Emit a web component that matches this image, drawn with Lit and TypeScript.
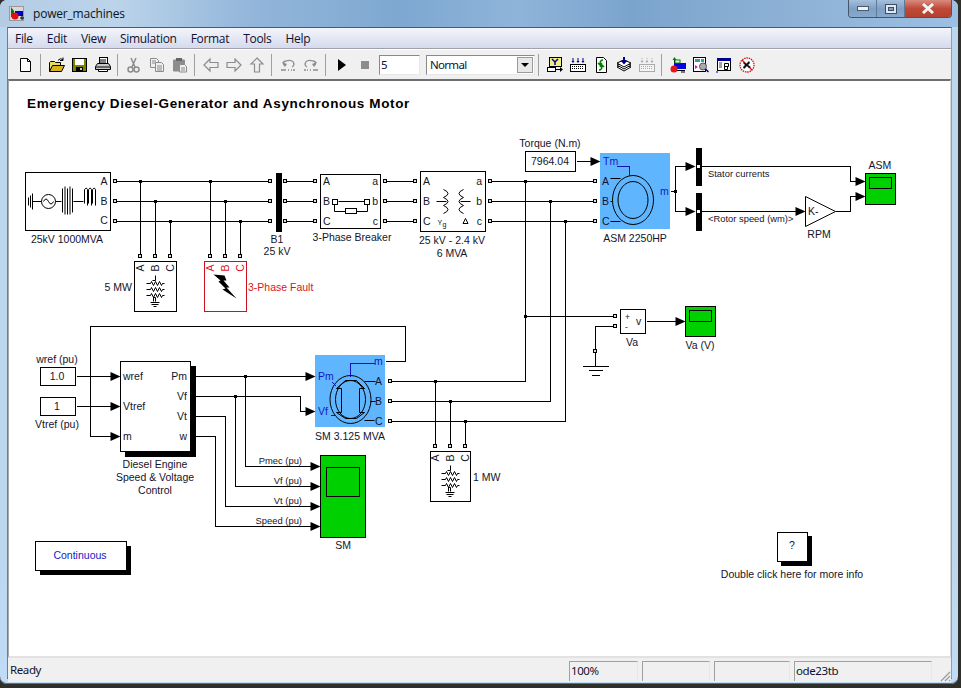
import { LitElement, css, html, svg } from "lit";
import { customElement } from "lit/decorators.js";

// ---- diagram data, coordinates are screen pixels ----
const PHASES = [181, 201, 221];

const WIRES = [
  "M115 181H270M115 201H270M115 221H270",
  "M140 181V256M155 201V256M170 221V256M210 181V256M225 201V256M240 221V256",
  "M285 181H315M285 201H315M285 221H315",
  "M385 181H415M385 201H415M385 221H415",
  "M490 181H595M490 201H595M490 221H595",
  "M525 181V381H390M550 201V401H390M565 221V421H390",
  "M435 381V446M450 401V446M465 421V446",
  "M525 316H615M615 326H595V351M595 351V366",
  "M582 366H608M588 370H602M591 375H599",
  "M646 321H676M576 161H591",
  "M670 191H675M686 166H675V211H686",
  "M701 166H850V181H856M701 211H796M835 211H850V196H856",
  "M385 361H405V326H90V436H111M76 376H111M76 406H111",
  "M195 376H306M195 396H300V411H306M195 416H225V506H311M195 436H215V526H311",
  "M245 376V466H311M235 396V486H311",
];

const JUNCTIONS = [
  [140, 181], [210, 181], [155, 201], [225, 201], [170, 221], [240, 221],
  [525, 181], [550, 201], [565, 221], [525, 316], [675, 191],
  [435, 381], [450, 401], [465, 421], [245, 376], [235, 396],
];

const PORTS: number[][] = [
  ...[115, 270, 285, 315, 385, 415, 490, 595].flatMap((x) => PHASES.map((y) => [x, y])),
  ...[140, 155, 170, 210, 225, 240].map((x) => [x, 256]),
  ...[435, 450, 465].map((x) => [x, 446]),
  ...[381, 401, 421].map((y) => [390, y]),
  [615, 316], [615, 326], [595, 351],
];

const ARROWS = [
  [600, 161], [695, 166], [695, 211], [865, 181], [865, 196], [805, 211], [685, 321],
  [120, 376], [120, 406], [120, 436], [315, 376], [315, 411],
  [320, 466], [320, 486], [320, 506], [320, 526],
];

// x, centre y, text, anchor, class
const LABELS: [number, number, string, string, string][] = [
  [104, 181, "A", "middle", ""], [104, 201, "B", "middle", ""], [104, 220, "C", "middle", ""],
  [67, 239, "25kV 1000MVA", "middle", ""],
  [277, 239, "B1", "middle", ""], [277, 251, "25 kV", "middle", ""],
  [132, 287, "5 MW", "end", ""], [248, 287, "3-Phase Fault", "start", "red"],
  [323, 181, "A", "start", ""], [323, 201, "B", "start", ""], [323, 221, "C", "start", ""],
  [378, 181, "a", "end", ""], [378, 201, "b", "end", ""], [378, 221, "c", "end", ""],
  [352, 237, "3-Phase Breaker", "middle", ""],
  [423, 181, "A", "start", ""], [423, 201, "B", "start", ""], [423, 221, "C", "start", ""],
  [482, 181, "a", "end", ""], [482, 201, "b", "end", ""], [482, 221, "c", "end", ""],
  [452, 240, "25 kV - 2.4 kV", "middle", ""], [452, 253, "6 MVA", "middle", ""],
  [550, 143, "Torque (N.m)", "middle", ""], [550, 161, "7964.04", "middle", ""],
  [603, 161, "Tm", "start", "blue"], [660, 191, "m", "start", "blue"],
  [602, 181, "A", "start", ""], [602, 201, "B", "start", ""], [602, 221, "C", "start", ""],
  [635, 238, "ASM 2250HP", "middle", ""],
  [708, 173, "Stator currents", "start", "sig"], [708, 218, "<Rotor speed (wm)>", "start", "sig"],
  [808, 211, "K-", "start", ""], [819, 234, "RPM", "middle", ""], [880, 165, "ASM", "middle", ""],
  [625, 316, "+", "start", "sign"], [625, 326, "-", "start", "sign"], [636, 321, "v", "start", ""],
  [632, 342, "Va", "middle", ""], [700, 345, "Va (V)", "middle", ""],
  [57, 359, "wref (pu)", "middle", ""], [57, 376, "1.0", "middle", ""],
  [57, 406, "1", "middle", ""], [57, 424, "Vtref (pu)", "middle", ""],
  [123, 376, "wref", "start", ""], [123, 406, "Vtref", "start", ""], [123, 436, "m", "start", ""],
  [187, 376, "Pm", "end", ""], [187, 396, "Vf", "end", ""], [187, 416, "Vt", "end", ""], [187, 436, "w", "end", ""],
  [155, 464, "Diesel Engine", "middle", ""], [155, 477, "Speed & Voltage", "middle", ""], [155, 490, "Control", "middle", ""],
  [318, 376, "Pm", "start", "blue"], [318, 411, "Vf", "start", "blue"], [374, 361, "m", "start", "blue"],
  [375, 381, "A", "start", ""], [375, 401, "B", "start", ""], [375, 421, "C", "start", ""],
  [350, 436, "SM 3.125 MVA", "middle", ""], [473, 477, "1 MW", "start", ""],
  [302, 460, "Pmec (pu)", "end", "sig"], [302, 480, "Vf (pu)", "end", "sig"],
  [302, 500, "Vt (pu)", "end", "sig"], [302, 520, "Speed (pu)", "end", "sig"],
  [343, 545, "SM", "middle", ""],
  [80, 555, "Continuous", "middle", "blue"], [792, 545, "?", "middle", ""],
  [792, 574, "Double click here for more info", "middle", ""],
];

// x, baseline offset y, letter, class for the terminals written sideways
const ROTATED: [number, number, string, string][] = [
  [140, 268, "A", ""], [155, 268, "B", ""], [170, 268, "C", ""],
  [210, 268, "A", "red"], [225, 268, "B", "red"], [240, 268, "C", "red"],
  [435, 458, "A", ""], [450, 458, "B", ""], [465, 458, "C", ""],
];

// x, y, w, h plain white blocks
const BLOCKS = [
  [25, 172, 85, 58], [320, 174, 60, 54], [420, 171, 65, 60],
  [525, 151, 50, 20], [620, 309, 25, 24], [134, 261, 42, 50], [430, 451, 40, 50],
  [40, 367, 35, 18], [40, 397, 35, 18],
];

function rect(r: number[], cls = "blk") {
  return svg`<rect class=${cls} x=${r[0]} y=${r[1]} width=${r[2]} height=${r[3]}></rect>`;
}

// three stacked resistors and a ground, used for both load blocks
function load(cx: number, top: number) {
  const zig = (y: number) =>
    `M${cx - 9} ${y}h4l1-2 2 4 2-4 2 4 2-4 2 4 1-2h2`;
  return svg`<path class="thin" d="M${cx} ${top + 14}v5h-3 M${cx} ${top + 36}h-2v4 M${cx} ${top + 36}v4
    ${zig(top + 22)} ${zig(top + 28)} ${zig(top + 34)}
    M${cx - 5} ${top + 41}h9 M${cx - 4} ${top + 43}h7 M${cx - 2} ${top + 45}h3"></path>`;
}

function scope(x: number, y: number, w: number, h: number, sx: number, sy: number, sw: number, sh: number) {
  return svg`${rect([x, y, w, h], "green")}${rect([sx, sy, sw, sh], "screen")}`;
}

function diagram() {
  return svg`
    <text class="heading" x="27" y="107.5">Emergency Diesel-Generator and Asynchronous Motor</text>
    <rect class="motor" x="600" y="153" width="70" height="76"></rect>
    <rect class="motor" x="315" y="355" width="70" height="72"></rect>
    <g transform="translate(.5 .5)">
      ${BLOCKS.map((b) => rect(b))}
      ${rect([204, 261, 42, 50], "fault")}
      <rect class="shadow" x="124" y="365" width="71" height="91"></rect>
      ${rect([120, 361, 70, 90])}
      <rect class="shadow" x="39" y="545" width="91" height="29"></rect>
      ${rect([35, 541, 91, 29])}
      <rect class="shadow" x="780" y="535" width="31" height="30"></rect>
      ${rect([777, 532, 30, 29])}
      ${scope(865, 173, 30, 31, 869, 177, 22, 11)}
      ${scope(685, 306, 30, 30, 689, 310, 22, 11)}
      ${scope(320, 455, 45, 82, 326, 467, 33, 29)}
      <rect class="bus" x="275" y="172" width="6" height="59"></rect>
      <rect class="bus" x="695" y="147" width="6" height="38"></rect>
      <rect class="bus" x="695" y="192" width="6" height="38"></rect>
      <path class="gainp" d="M805 196V226L835 211Z"></path>

      <path class="wire" d=${WIRES.join("")}></path>
      ${JUNCTIONS.map((j) => svg`<rect class="dot" x=${j[0] - 1} y=${j[1] - 1} width="2" height="2"></rect>`)}
      ${PORTS.map((p) => svg`<rect class="port" x=${p[0] - 2} y=${p[1] - 2} width="3" height="3"></rect>`)}
      <path class="busport" d="M696 164h4v4h-4zM696 209h4v4h-4z"></path>

      <!-- source -->
      <path class="thin" d="M28 197v8M30 195v12M32 193v16M32 201H41M55 201h6
        M62 188v24M64.500 186v28M67 188v26M69.500 186v28M72 188v24
        M73 201h10M84 189q2-3 3 0v16M84 189v14M88 189q2-3 3 0v16M88 189v14M92 189q2-3 3 0v16M92 189v14"></path>
      <circle class="thin" cx="48" cy="201" r="7"></circle>
      <path class="thin" d="M43 201q2.500-5 5 0t5 0"></path>

      ${load(155, 261)}
      ${load(450, 451)}
      <path class="fill" d="M213 274L224 275L226 280L223 280L229 287L226 287L236 298L222 289L225 288L218 281L220 280Z"></path>

      <!-- breaker -->
      <path class="thin" d="M338 201H364M334 204V211H345M356 211H367V204"></path>
      <rect class="blk" x="332" y="199" width="5" height="5"></rect>
      <rect class="blk" x="364" y="199" width="5" height="5"></rect>
      <rect class="blk" x="345" y="208" width="11" height="5"></rect>

      <!-- transformer -->
      <path class="thin" d="M436 201h10M460 201h10
        M443 189q9 4 0 8q9 4 0 8q9 4 0 8M463 189q-9 4 0 8q-9 4 0 8q-9 4 0 8"></path>
      <text class="tiny" x="437" y="224">Y</text><text class="tiny" x="442" y="226">g</text>
      <path class="thin" d="M465 218l2.500 5h-5z"></path>

      <!-- asynchronous motor -->
      <ellipse class="thin" cx="632.500" cy="199.500" rx="20.500" ry="24.500"></ellipse>
      <ellipse class="thin" cx="632.500" cy="199.500" rx="15" ry="18.500"></ellipse>
      <path class="bluewire" d="M616 166H629V175"></path>
      <path class="thin" d="M610 178H620M610 201H612M610 221H620"></path>

      <!-- synchronous machine -->
      <ellipse class="thin" cx="350" cy="399" rx="20.500" ry="24"></ellipse>
      <ellipse class="thin" cx="350" cy="399" rx="15" ry="19"></ellipse>
      <path class="thin" d="M345 380H356L364 388H359V412H364L356 418H345L336 412H341V388H336Z"></path>
      <path class="bluewire" d="M350 376V363H374M332 382L336 386M330 415H334"></path>
      <path class="thin" d="M364 381H375M370 401H375M364 420H374"></path>

      ${ARROWS.map((a) => svg`<path class="fill" d="M${a[0] - 10} ${a[1] - 4.500}V${a[1] + 4.500}L${a[0]} ${a[1]}Z"></path>`)}
    </g>
    ${LABELS.map((l) => svg`<text class="lbl ${l[4]}" x=${l[0]} y=${l[1] + 4} text-anchor=${l[3]}>${l[2]}</text>`)}
    ${ROTATED.map((r) => svg`
      <text class="lbl ${r[3]}" text-anchor="middle" transform="translate(${r[0] + 4} ${r[1]}) rotate(-90)">${r[2]}</text>`)}
  `;
}

// ---- toolbar icons, 16x16 ----
const G = "#8c8c8c";
const ICONS: Record<string, unknown> = {
  doc: svg`<path d="M2.500 1.500h7l3 3v10h-10z" fill="#fff" stroke="#000"/><path d="M9.500 1.500v3h3" fill="none" stroke="#000"/>`,
  open: svg`<path d="M.5 14.500V5.500l1-1h4l1 1h5v3" fill="#e8dc60" stroke="#000"/><path d="M.5 14.500l3-6h12l-3 6z" fill="#d8b020" stroke="#000"/><path d="M9 3.500q2-3 5-1M14 .5v3h-3" fill="none" stroke="#000"/>`,
  save: svg`<rect x=".5" y="1.500" width="14" height="13" fill="#808000" stroke="#000"/><rect x="3" y="2" width="9" height="6" fill="#fff"/><rect x="4" y="10" width="7" height="4" fill="#000"/><rect x="8" y="11" width="2" height="2" fill="#ccc"/>`,
  print: svg`<rect x="4.500" y=".5" width="8" height="6" fill="#fff" stroke="#000"/><path d="M5 3h6M5 5h6" stroke="#000"/><path d="M2.500 6.500h11l2 3v3h-15v-3z" fill="#c8c8c8" stroke="#000"/><path d="M1 10h14" stroke="#000"/><path d="M3.500 12.500h9v2h-9z" fill="#fff" stroke="#000"/>`,
  cut: svg`<path d="M5 1l4 9M10 1L6 10" stroke="${G}" fill="none" stroke-width="1.500"/><circle cx="4.500" cy="12.500" r="2.500" fill="none" stroke="${G}" stroke-width="1.500"/><circle cx="10.500" cy="12.500" r="2.500" fill="none" stroke="${G}" stroke-width="1.500"/>`,
  copy: svg`<path d="M1.500 1.500h6l2 2v7h-8z" fill="#eee" stroke="${G}"/><path d="M6.500 5.500h6l2 2v7h-8z" fill="#eee" stroke="${G}"/><path d="M3 4h4M3 6h3M8 9h5M8 11h5M8 13h5" stroke="${G}"/>`,
  paste: svg`<rect x="1" y="2.500" width="12" height="12" rx="1" fill="${G}"/><rect x="4" y="1" width="6" height="3" fill="#666"/><path d="M7.500 7.500h5l2 2v5.500h-7z" fill="#eee" stroke="${G}"/><path d="M9 11h4M9 13h4" stroke="${G}"/>`,
  back: svg`<path d="M1 8l6-6v3.500h8v5H7V14z" fill="#eee" stroke="${G}" stroke-width="1.200"/>`,
  forward: svg`<path d="M15 8L9 2v3.500H1v5h8V14z" fill="#eee" stroke="${G}" stroke-width="1.200"/>`,
  up: svg`<path d="M8 1l6 6h-3.500v8h-5V7H2z" fill="#eee" stroke="${G}" stroke-width="1.200"/>`,
  undo: svg`<path d="M5 9Q1 5 6 4q7-2 8 3 0 2-2 3" fill="none" stroke="${G}" stroke-width="1.300"/><path d="M2 5l3 5 2-3z" fill="${G}"/><path d="M1 13h5M8 13h1M11 13h1M13 13h2" stroke="${G}" stroke-width="1.500"/>`,
  redo: svg`<path d="M11 9q4-4-1-5Q3 2 2 7q0 2 2 3" fill="none" stroke="${G}" stroke-width="1.300"/><path d="M14 5l-3 5-2-3z" fill="${G}"/><path d="M15 13h-5M8 13H7M5 13H4M3 13H1" stroke="${G}" stroke-width="1.500"/>`,
  play: svg`<path d="M4 2l8 6-8 6z" fill="#000"/>`,
  stop: svg`<rect x="4" y="4" width="8" height="8" fill="${G}"/>`,
  library: svg`<rect x="2.500" y=".5" width="12" height="9" fill="#f4f080" stroke="#000"/><path d="M5 2l3 3 3-3M8 5v3" stroke="#00008c" stroke-width="1.500" fill="none"/><rect x=".5" y="10.500" width="8" height="4" fill="#fff" stroke="#000"/><path d="M9 12.500h5" stroke="#000"/><path d="M13 10l3 2.500-3 2.500z" fill="#000"/>`,
  keys: svg`<path d="M3 1v4M8 1v4M13 1v4" stroke="#00008c"/><path d="M1.500 4l1.500 2 1.500-2zM6.500 4l1.500 2 1.500-2zM11.500 4l1.500 2 1.500-2z" fill="#00008c"/><rect x=".5" y="7.500" width="15" height="7" fill="#fff" stroke="#000"/><path d="M2 9.500h12M2 11.500h12" stroke="#000" stroke-dasharray="1 1"/>`,
  refresh: svg`<path d="M3.500 .5h7l3 3v12h-10z" fill="#fff" stroke="#000"/><path d="M10 3q-3 0-3 4M5 6l2 2 2-2M6 13q3 0 3-4M11 10L9 8l-2 2" fill="none" stroke="#008000" stroke-width="1.500"/>`,
  stack: svg`<path d="M8 7L1 10l7 4 7-4z" fill="#fff" stroke="#000"/><path d="M8 5L1 8l7 4 7-4z" fill="#fff" stroke="#000"/><path d="M8 3L1 6l7 4 7-4z" fill="#fff" stroke="#000"/><path d="M8 0v4" stroke="#00008c" stroke-width="2"/><path d="M4.500 3.500h7L8 7.500z" fill="#00008c"/>`,
  keysoff: svg`<path d="M3 1v4M8 1v4M13 1v4" stroke="#aaa" stroke-dasharray="1 1"/><path d="M1.500 4l1.500 2 1.500-2zM6.500 4l1.500 2 1.500-2zM11.500 4l1.500 2 1.500-2z" fill="#aaa"/><rect x=".5" y="7.500" width="15" height="7" fill="#f4f4f4" stroke="#aaa"/><path d="M2 9.500h12M2 11.500h12" stroke="#aaa" stroke-dasharray="1 1"/>`,
  data: svg`<path d="M4.500 1v12.500H15" fill="none" stroke="#000"/><path d="M2.500 3L4.500 0l2 3z" fill="#008000"/><rect x="4" y="6" width="12" height="6" fill="#0000e0"/><rect x="5" y="3" width="5" height="3" fill="#fff" stroke="#008000"/><circle cx="4" cy="12" r="3.500" fill="#e01818"/><path d="M11 15h4" stroke="#000"/>`,
  explore: svg`<rect x=".5" y=".5" width="12" height="14" fill="#fff" stroke="#000"/><rect x="2" y="2" width="5" height="3" fill="#30a0a0"/><rect x="8" y="2" width="3" height="3" fill="#30a0a0"/><path d="M2 8l3 2-3 2z" fill="#f000f0"/><circle cx="10" cy="9.500" r="3.500" fill="#aaa" stroke="#555"/><path d="M12.500 12l3 3" stroke="#00008c" stroke-width="1.500"/>`,
  window: svg`<rect x="1.500" y="1.500" width="13" height="12" fill="#fff" stroke="#000"/><rect x="1" y="1" width="14" height="3" fill="#00008c"/><path d="M3 6h3M3 8h3M3 10h3" stroke="#444"/><path d="M8.500 6.500h4v3h-4zM8.500 9.500h3v3h-3z" fill="none" stroke="#000"/><path d="M0 15h2" stroke="#00008c"/>`,
  bug: svg`<circle cx="8" cy="8" r="7" fill="#fff" stroke="#e01010" stroke-dasharray="1.500 .8" stroke-width="1.300"/><path d="M3 3l10 10" stroke="#e01010" stroke-width="1.300"/><path d="M5 5l2 2 3-3 1 2-2 2 3 2-2 1-2-2-3 3-1-2 2-2-2-2z" fill="#111"/>`,
};

const LEFT_TOOLS = [["doc"], ["open", "save", "print"], ["cut", "copy", "paste"], ["back", "forward", "up"], ["undo", "redo"], ["play", "stop"]];
const RIGHT_TOOLS = [["library", "keys", "refresh", "stack", "keysoff"], ["data", "explore", "window", "bug"]];
const MENUS = ["File", "Edit", "View", "Simulation", "Format", "Tools", "Help"];

@customElement("app-root")
export class AppRoot extends LitElement {
  static styles = css`
    :host {
      display: block;
      width: 961px;
      height: 688px;
      overflow: hidden;
      background: #2e2e2a;
      font-family: "Open Sans", "Noto Sans", sans-serif;
      color: #101030;
    }
    .window {
      width: 958px;
      height: 684px;
      box-sizing: border-box;
      padding: 0 6px 5px 7px;
      display: flex;
      flex-direction: column;
      border-radius: 7px;
      background: linear-gradient(180deg, #bcd6ee 0 80%, #c0dcf6 100%);
      box-shadow: inset 0 -1px 0 #5c7080;
    }
    .title {
      height: 27px;
      flex: none;
      margin: 0 -6px 0 -7px;
      padding: 0 6px 0 9px;
      display: flex;
      align-items: flex-start;
      border-radius: 7px 7px 0 0;
      background: linear-gradient(90deg, #b3cce4 0, #bcd4ea 12%, #93b6da 26%, #7ea8d1 42%, #8fb4da 54%, #7ba4cd 66%, #8db1d5 82%, #9cc0e3 100%);
    }
    .appicon {
      margin-top: 6px;
      width: 15px;
      height: 15px;
      flex: none;
    }
    .caption {
      margin: 5px 0 0 9px;
      font-size: 12px;
      line-height: 18px;
      color: #0c1420;
      letter-spacing: -0.2px;
    }
    .controls {
      margin-left: auto;
      display: flex;
      height: 18px;
      border: 1px solid #44566a;
      border-top: none;
      border-radius: 0 0 4px 4px;
      overflow: hidden;
      box-sizing: border-box;
    }
    .controls div {
      display: flex;
      align-items: center;
      justify-content: center;
      width: 27px;
      border-right: 1px solid #5c7a9a;
      background: linear-gradient(180deg, #a4c0dc, #7f9fc4 50%, #86a9ce);
    }
    .controls .close {
      width: 46px;
      border: none;
      background: linear-gradient(180deg, #d88c80, #bf4a38 50%, #b6402e);
    }
    .content {
      flex: 1;
      display: flex;
      flex-direction: column;
      border: 1px solid #4a5a6a;
      border-left-color: #6a7f94;
      border-right-color: #8aa0b4;
      min-height: 0;
    }
    .menubar {
      height: 20px;
      flex: none;
      display: flex;
      align-items: center;
      padding-left: 7px;
      font-size: 12px;
      background: linear-gradient(180deg, #f4f5fb, #d5dbed);
    }
    .menubar span {
      margin-right: 14px;
      letter-spacing: -0.3px;
    }
    .rule {
      height: 1px;
      flex: none;
      border-top: 1px solid #a0a0a8;
      background: #fff;
    }
    .toolbar {
      height: 29px;
      flex: none;
      display: flex;
      align-items: center;
      padding-left: 6px;
      background: #f0f0f0;
    }
    .tool {
      width: 23px;
      height: 16px;
      flex: none;
      display: flex;
      justify-content: center;
    }
    .tool svg {
      width: 16px;
      height: 16px;
      display: block;
    }
    .sep {
      width: 1px;
      height: 22px;
      margin: 0 4px 0 3px;
      flex: none;
      background: #a0a0a0;
    }
    .field {
      height: 20px;
      box-sizing: border-box;
      flex: none;
      border: 1px solid;
      border-color: #8a8a8a #e8e8e8 #e8e8e8 #8a8a8a;
      background: #fff;
      font-size: 11.500px;
      line-height: 18px;
      padding-left: 1px;
      font-family: "Noto Sans", sans-serif;
    }
    .run {
      width: 41px;
      margin-left: 3px;
    }
    .mode {
      width: 109px;
      margin-left: 6px;
      padding-left: 3px;
      display: flex;
      justify-content: space-between;
      letter-spacing: -0.7px;
    }
    .dropdown {
      width: 16px;
      height: 16px;
      margin: 1px;
      background: #e8e8e8;
      border: 1px solid #9a9a9a;
      box-sizing: border-box;
      display: flex;
      align-items: center;
      justify-content: center;
    }
    .dropdown::after {
      content: "";
      border: 4px solid transparent;
      border-top: 4px solid #000;
      border-bottom: none;
    }
    .canvas {
      flex: none;
      background: #fff;
      border-top: 2px solid #6e6e6e;
      border-left: 1px solid #a8a8a8;
      border-right: 1px solid #d8d8d8;
      border-bottom: 2px solid #e2e2e2;
      height: 575px;
    }
    .canvas svg {
      display: block;
    }
    .status {
      flex: 1;
      display: flex;
      align-items: stretch;
      background: #f0f0f0;
      font-size: 11.500px;
      letter-spacing: -0.4px;
      font-family: "Noto Sans", sans-serif;
    }
    .ready {
      flex: 1;
      padding-left: 2px;
      line-height: 24px;
    }
    .pane {
      margin: 3px 4px 1px 0;
      box-sizing: border-box;
      border-top: 1px solid #a0a0a0;
      border-left: 1px solid #a0a0a0;
      border-right: 1px solid #e8e8e8;
      line-height: 18px;
      padding-left: 1px;
    }
    .grip {
      width: 18px;
      flex: none;
      margin-left: -3px;
      display: flex;
      align-items: flex-end;
      justify-content: flex-end;
    }

    text {
      font-family: "Liberation Sans", Arial, sans-serif;
    }
    .heading {
      font-size: 13.500px;
      font-weight: 700;
      letter-spacing: 0.63px;
      fill: #000;
    }
    .lbl {
      font-size: 10.500px;
      fill: #14142a;
    }
    .lbl.sig {
      font-size: 9.400px;
    }
    .lbl.sign {
      font-size: 8.500px;
    }
    .lbl.red {
      fill: #e01028;
    }
    .lbl.blue {
      fill: #1818c0;
    }
    .tiny {
      font-size: 7px;
      fill: #111;
    }
    .blk {
      fill: #fff;
      stroke: #000;
      shape-rendering: crispEdges;
    }
    .fault {
      fill: #fff;
      stroke: #d01020;
      shape-rendering: crispEdges;
    }
    .shadow,
    .bus,
    .dot {
      fill: #000;
      shape-rendering: crispEdges;
    }
    .dot {
      stroke: #000;
    }
    .motor {
      fill: #5fb6ff;
      stroke: none;
      shape-rendering: crispEdges;
    }
    .green,
    .screen {
      fill: #00d000;
      stroke: #000;
      shape-rendering: crispEdges;
    }
    .wire {
      fill: none;
      stroke: #000;
      shape-rendering: crispEdges;
    }
    .bluewire {
      fill: none;
      stroke: #1010c0;
      shape-rendering: crispEdges;
    }
    .port {
      fill: #ddd;
      stroke: #000;
      shape-rendering: crispEdges;
    }
    .busport {
      fill: #fff;
      stroke: #000;
      shape-rendering: crispEdges;
    }
    .gainp {
      fill: #fff;
      stroke: #000;
    }
    .thin {
      fill: none;
      stroke: #000;
    }
    .fill {
      fill: #000;
    }
  `;

  render() {
    return html`
      <div class="window">
        <div class="title">
          <svg class="appicon" viewBox="0 0 15 15">
            <rect width="15" height="15" fill="#9a9a9a"></rect>
            <rect x="1" y="1" width="13" height="13" fill="#d8d8d8"></rect>
            <path d="M2 1l3 4v6H2z" fill="#008000"></path>
            <rect x="6" y="5" width="8" height="5" fill="#0000d0"></rect>
            <circle cx="6" cy="10" r="3.500" fill="#e01010"></circle>
            <path d="M13 7v7M11 12h4" stroke="#000"></path>
          </svg>
          <span class="caption">power_machines</span>
          <div class="controls">
            <div>
              <svg width="12" height="6"><rect x=".5" y=".5" width="11" height="4" fill="#eef3f8" stroke="#4a5a6e"></rect></svg>
            </div>
            <div>
              <svg width="12" height="10"><rect x=".5" y=".5" width="11" height="9" fill="#dfe8f2" stroke="#3e4e62"></rect><rect x="3.500" y="3.500" width="5" height="3" fill="#7f9fc4" stroke="#3e4e62"></rect></svg>
            </div>
            <div class="close">
              <svg width="14" height="11" viewBox="0 0 14 11"><path d="M2 1l10 9M12 1L2 10" stroke="#f4f4f4" stroke-width="3"></path></svg>
            </div>
          </div>
        </div>
        <div class="content">
          <div class="menubar">${MENUS.map((m) => html`<span>${m}</span>`)}</div>
          <div class="rule"></div>
          <div class="toolbar">
            ${LEFT_TOOLS.map(
              (g, i) => html`
                ${g.map(this.tool)}
                ${i < LEFT_TOOLS.length - 1 ? html`<div class="sep"></div>` : ""}
              `
            )}
            <div class="field run">5</div>
            <div class="field mode">Normal<span class="dropdown"></span></div>
            ${RIGHT_TOOLS.map((g) => html`<div class="sep"></div>${g.map(this.tool)}`)}
          </div>
          <div class="canvas">
            <svg width="941" height="575" viewBox="9 81 941 575">${diagram()}</svg>
          </div>
          <div class="status">
            <div class="ready">Ready</div>
            <div class="pane" style="width:69px">100%</div>
            <div class="pane" style="width:68px"></div>
            <div class="pane" style="width:76px"></div>
            <div class="pane" style="width:138px">ode23tb</div>
            <div class="grip">
              <svg width="12" height="12" viewBox="0 0 12 12"><path d="M11 2L2 11M11 6l-5 5M11 10l-1 1" stroke="#9a9a9a" stroke-width="1.200"></path></svg>
            </div>
          </div>
        </div>
      </div>
    `;
  }

  tool(name: string) {
    return html`<div class="tool"><svg viewBox="0 0 16 16">${ICONS[name]}</svg></div>`;
  }
}
